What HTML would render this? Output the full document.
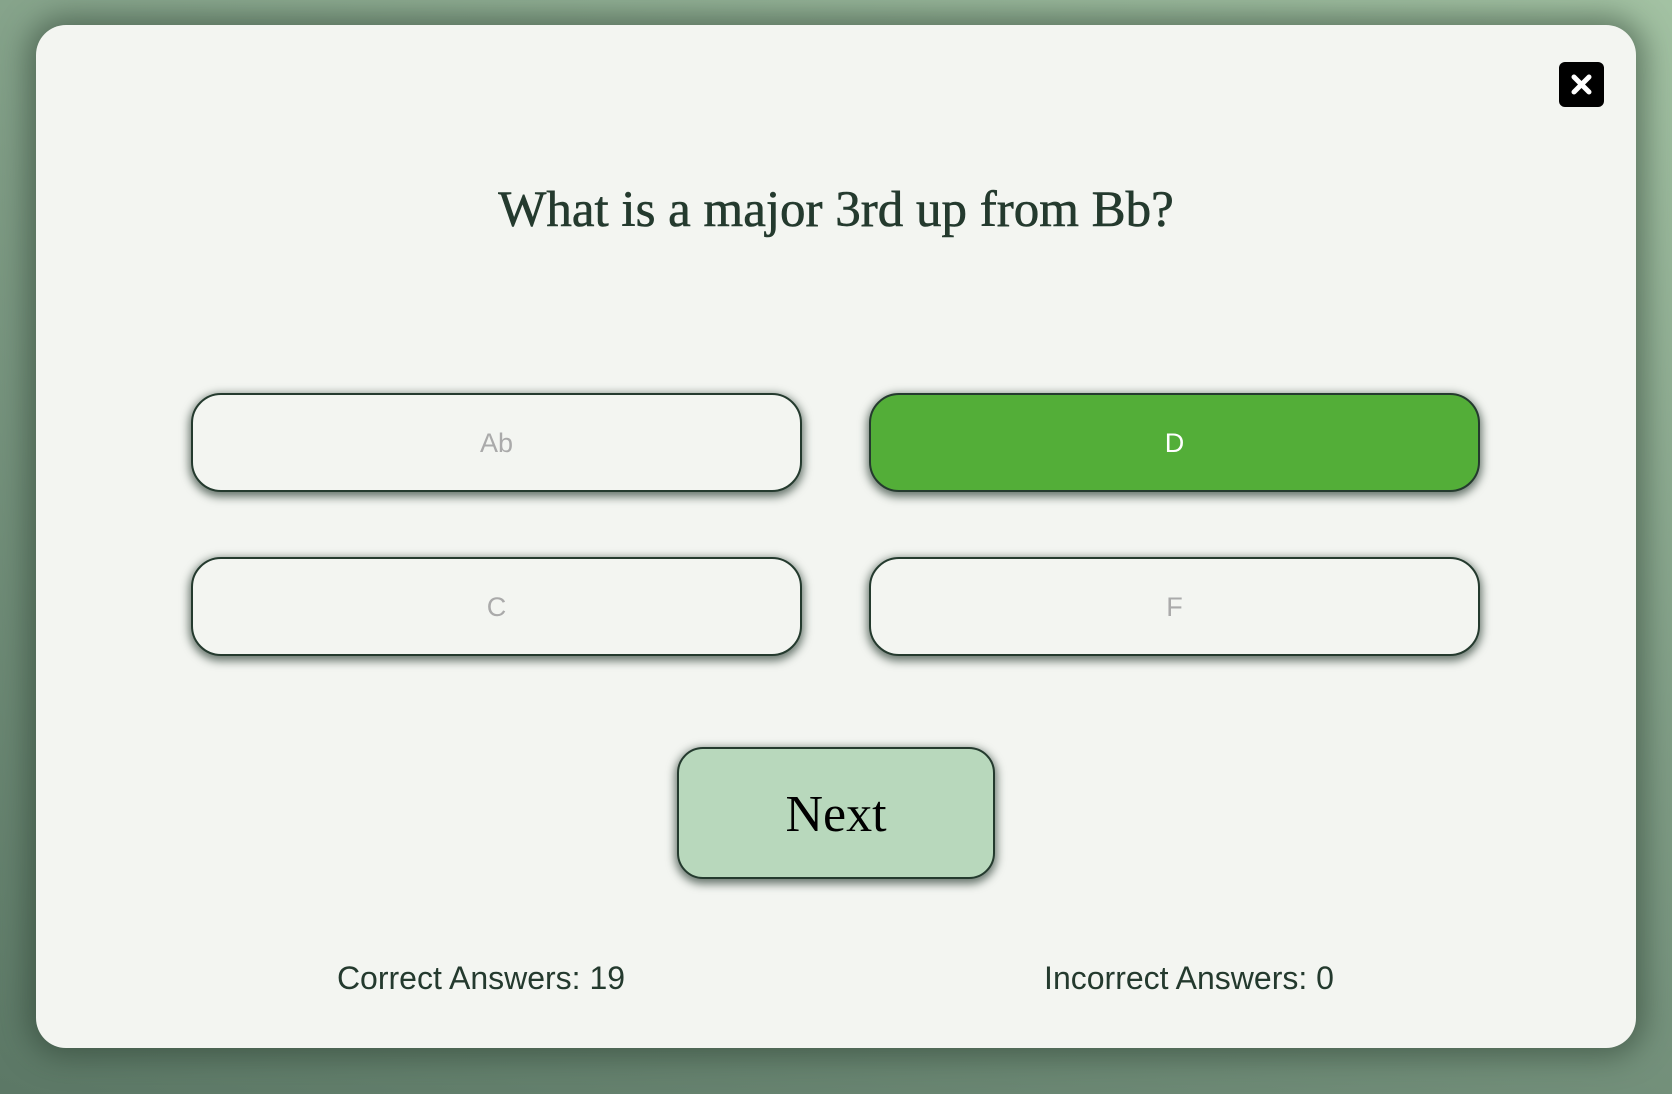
<!DOCTYPE html>
<html><head><style>
html,body{margin:0;padding:0;}
body{width:1672px;height:1094px;overflow:hidden;position:relative;background:linear-gradient(200deg,#a3c2a3 0%,#7f9c85 45%,#5c7866 100%);font-family:"Liberation Sans",sans-serif;}
.card{position:absolute;left:36px;top:25px;width:1600px;height:1023px;background:#f3f5f1;border-radius:30px;box-shadow:0 0 30px 8px rgba(40,60,45,0.55);}
.close{position:absolute;left:1559px;top:62px;width:45px;height:45px;background:#000;border-radius:6px;}
.q{position:absolute;left:0;width:1672px;top:181px;text-align:center;font-family:"Liberation Serif",serif;font-size:51px;color:#243a2e;-webkit-text-stroke:0.6px #243a2e;}
.b{position:absolute;width:607px;height:95px;border:2px solid #243a2e;border-radius:30px;background:#f3f5f1;box-shadow:0 3px 9px 2px rgba(30,50,40,0.65);text-align:center;line-height:97px;font-size:27px;color:#aaa;}
.g{background:#53ae38;color:#fff;}
.next{position:absolute;left:677px;top:747px;width:314px;height:128px;border:2px solid #243a2e;border-radius:26px;background:#b8d8bc;box-shadow:0 3px 9px 2px rgba(30,50,40,0.65);text-align:center;line-height:132px;font-family:"Liberation Serif",serif;font-size:52px;color:#000;}
.f{position:absolute;top:960px;font-size:32px;color:#243a2e;width:500px;text-align:center;}
</style></head><body>
<div class="card"></div>
<div class="close"><svg width="45" height="45" viewBox="0 0 45 45"><path d="M15 15L30 30M30 15L15 30" stroke="#fff" stroke-width="5" stroke-linecap="round"/></svg></div>
<div class="q">What is a major 3rd up from Bb?</div>
<div class="b" style="left:191px;top:393px">Ab</div>
<div class="b g" style="left:869px;top:393px">D</div>
<div class="b" style="left:191px;top:557px">C</div>
<div class="b" style="left:869px;top:557px">F</div>
<div class="next">Next</div>
<div class="f" style="left:231px">Correct Answers: 19</div>
<div class="f" style="left:939px">Incorrect Answers: 0</div>
</body></html>
